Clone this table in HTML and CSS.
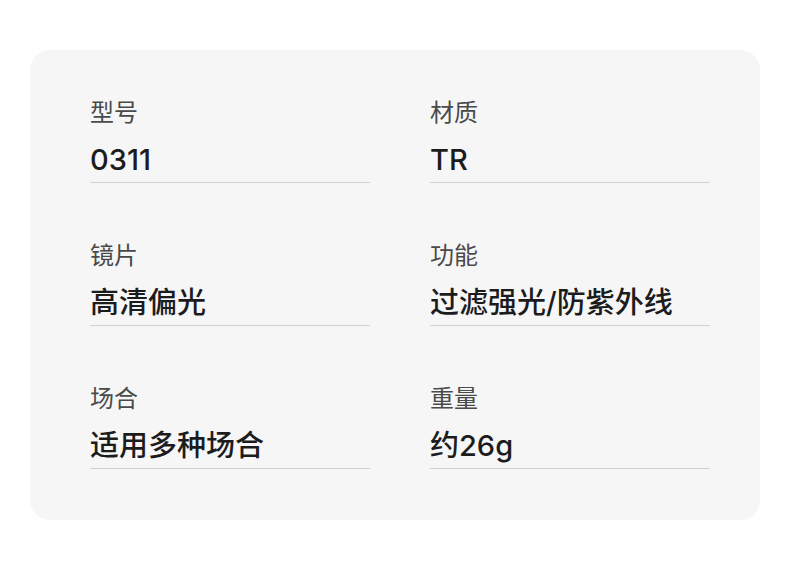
FILE: index.html
```html
<!DOCTYPE html>
<html lang="zh-CN">
<head>
<meta charset="utf-8">
<link rel="stylesheet" href="styles.css">
</head>
<body>
<div class="card">
  <div class="item"><div class="label">型号</div><div class="value">0311</div></div>
  <div class="item"><div class="label">材质</div><div class="value">TR</div></div>
  <div class="item"><div class="label">镜片</div><div class="value">高清偏光</div></div>
  <div class="item"><div class="label">功能</div><div class="value">过滤强光/防紫外线</div></div>
  <div class="item"><div class="label">场合</div><div class="value">适用多种场合</div></div>
  <div class="item"><div class="label">重量</div><div class="value">约26g</div></div>
</div>
</body>
</html>
```
FILE: styles.css
```css
html, body {
  margin: 0;
  padding: 0;
  background: #ffffff;
}
body {
  width: 790px;
  height: 580px;
  padding: 50px 30px 0 30px;
  box-sizing: border-box;
  font-family: "Noto Sans CJK SC", "Noto Sans", sans-serif;
}
.card {
  width: 730px;
  height: 470px;
  box-sizing: border-box;
  background: #f6f6f6;
  border-radius: 20px;
  padding: 45px 50px 0 60px;
  display: grid;
  grid-template-columns: 280px 280px;
  column-gap: 60px;
  row-gap: 55px;
  align-content: start;
}
.item {
  display: flex;
  flex-direction: column;
  border-bottom: 1px solid #d2d2d2;
  padding-bottom: 2px;
}
.label {
  font-size: 24px;
  line-height: 32px;
  height: 32px;
  color: #4a4a4a;
  margin-bottom: 13px;
}
.value {
  font-family: Inter, "Noto Sans CJK SC", sans-serif;
  font-size: 29px;
  font-weight: 500;
  line-height: 40px;
  height: 40px;
  color: #1c1c1c;
  white-space: nowrap;
}
```
